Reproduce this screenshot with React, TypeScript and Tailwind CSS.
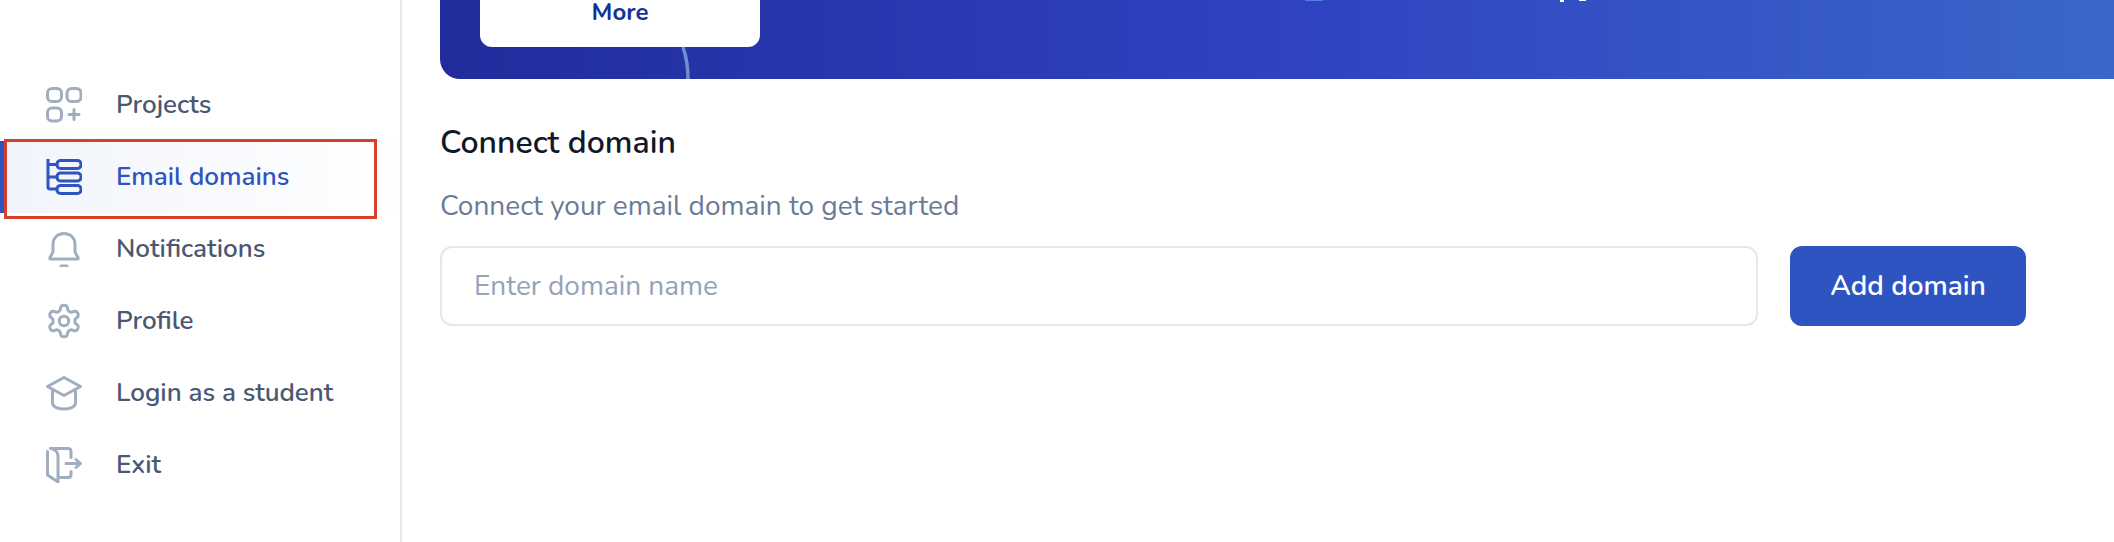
const font = "font-['Nunito','Lato','Noto_Sans',sans-serif]";

function ProjectsIcon() {
  return (
    <svg width="36" height="36" viewBox="0 0 36 36" fill="none" stroke="#a0aec0" strokeWidth="3" strokeLinecap="round">
      <rect x="1.5" y="1.5" width="14" height="13" rx="4.5" />
      <rect x="21" y="1.5" width="14" height="13" rx="4.5" />
      <rect x="1.5" y="21" width="14" height="13" rx="4.5" />
      <path d="M28 22.500v10M23 27.500h10" />
    </svg>
  );
}

function DomainsIcon() {
  return (
    <svg width="36" height="36" viewBox="0 0 36 36" fill="none" stroke="#2d54c0" strokeWidth="3" strokeLinecap="round">
      <rect x="11" y="1.500" width="24" height="8" rx="3.500" />
      <rect x="11" y="14" width="24" height="8" rx="3.500" />
      <rect x="11" y="26.500" width="24" height="8" rx="3.500" />
      <path d="M2 0.500v27.500a2 2 0 0 0 2 2h7M2 5.500h9M2 18h9" />
    </svg>
  );
}

function BellIcon() {
  return (
    <svg width="36" height="36" viewBox="0 0 36 36" fill="none" stroke="#a0aec0" strokeWidth="3" strokeLinecap="round" strokeLinejoin="round">
      <path d="M4 28h28c1-2.500-3-4.500-3-8v-6.500C29 7 24.500 2.500 18 2.500S7 7 7 13.500V20c0 3.500-4 5.500-3 8z" />
      <path d="M15 35h6" />
    </svg>
  );
}

function GearIcon() {
  return (
    <svg width="38" height="38" viewBox="0 0 24 24" fill="none" stroke="#a0aec0" strokeWidth="1.900" strokeLinecap="round" strokeLinejoin="round" className="-mx-px">
      <path d="M12.220 2h-.440a2 2 0 0 0-2 2v.180a2 2 0 0 1-1 1.730l-.430.250a2 2 0 0 1-2 0l-.150-.080a2 2 0 0 0-2.730.730l-.220.380a2 2 0 0 0 .730 2.730l.150.100a2 2 0 0 1 1 1.720v.510a2 2 0 0 1-1 1.740l-.150.090a2 2 0 0 0-.730 2.730l.220.380a2 2 0 0 0 2.730.730l.150-.080a2 2 0 0 1 2 0l.430.250a2 2 0 0 1 1 1.730V20a2 2 0 0 0 2 2h.440a2 2 0 0 0 2-2v-.180a2 2 0 0 1 1-1.730l.430-.250a2 2 0 0 1 2 0l.150.080a2 2 0 0 0 2.730-.730l.220-.390a2 2 0 0 0-.730-2.730l-.150-.080a2 2 0 0 1-1-1.740v-.500a2 2 0 0 1 1-1.740l.150-.090a2 2 0 0 0 .730-2.730l-.220-.380a2 2 0 0 0-2.730-.730l-.150.080a2 2 0 0 1-2 0l-.430-.250a2 2 0 0 1-1-1.730V4a2 2 0 0 0-2-2z" />
      <circle cx="12" cy="12" r="3" />
    </svg>
  );
}

function CapIcon() {
  return (
    <svg width="36" height="36" viewBox="0 0 36 36" fill="none" stroke="#a0aec0" strokeWidth="3" strokeLinecap="round" strokeLinejoin="round">
      <path d="M18 2.500 34.500 11.500 18 20.500 1.500 11.500z" />
      <path d="M6.500 16v12c0 3.500 5 6 11.500 6s11.500-2.500 11.500-6V16" />
    </svg>
  );
}

function ExitIcon() {
  return (
    <svg width="36" height="36" viewBox="0 0 36 36" fill="none" stroke="#a0aec0" strokeWidth="3" strokeLinecap="round" strokeLinejoin="round">
      <path d="M1.500 4.500 1.500 28 12 35V8.500C12 5 8 1.500 4.500 1.500H22c2 0 3 1.500 3 3v6M25 24.500v3c0 2-1 3-3 3H12" />
      <path d="M20 16.500h14M30 12.500l4.500 4-4.500 4" />
    </svg>
  );
}

const items = [
  { label: 'Projects', icon: <ProjectsIcon /> },
  { label: 'Email domains', icon: <DomainsIcon />, active: true },
  { label: 'Notifications', icon: <BellIcon /> },
  { label: 'Profile', icon: <GearIcon /> },
  { label: 'Login as a student', icon: <CapIcon /> },
  { label: 'Exit', icon: <ExitIcon /> },
];

export default function App() {
  return (
    <div className={`${font} flex h-[542px] w-[2114px] overflow-hidden bg-white`}>
      {/* sidebar */}
      <aside className="h-full w-[402px] shrink-0 border-r-2 border-[#e2e8f0] pt-[69px]">
        {items.map((item) => (
          <div
            key={item.label}
            className={`relative flex h-[72px] items-center gap-[34px] pl-[46px] text-[26px] font-semibold ${
              item.active ? 'bg-gradient-to-r from-[#f1f4fb] to-white text-[#2d54c0]' : 'text-[#4a5872]'
            }`}
          >
            {item.active && <span className="absolute left-0 top-0 h-full w-[7px] bg-[#2d54c0]" />}
            {item.active && <span className="absolute left-[4px] top-[-2px] h-[80px] w-[373px] border-[3px] border-[#d4402a]" />}
            {item.icon}
            <span className="pb-[1px]">{item.label}</span>
          </div>
        ))}
      </aside>

      {/* main */}
      <main className="min-w-0 flex-1 pl-[38px]">
        <div className="relative h-[79px] overflow-hidden rounded-bl-[20px] bg-gradient-to-r from-[#212c9c] via-[#2f42c0] to-[#3b66c9] pl-[40px]">
          <div className="flex h-[47px] w-[280px] items-start justify-center rounded-b-[12px] bg-white text-[24px] font-bold leading-[24px] text-[#12329a]">
            More
          </div>
          <svg className="absolute left-[240px] top-[47px]" width="12" height="32" viewBox="0 0 12 32" fill="none">
            <path d="M3 0c3 9 5 20 5 32" stroke="#6f8ecf" strokeWidth="3.500" />
          </svg>
          {/* bits of the cropped banner content */}
          <span className="absolute left-[865px] top-0 h-px w-[18px] bg-[#4f7fe0]" />
          <span className="absolute left-[1120px] top-0 h-[2px] w-[4px] bg-white" />
          <span className="absolute left-[1139px] top-0 h-px w-[7px] bg-white" />
        </div>
        <h2 className="mt-[42px] text-[32px] font-semibold leading-[44px] text-[#111827]">Connect domain</h2>
        <p className="mt-[22px] text-[28px] leading-[38px] text-[#6b7a99]">Connect your email domain to get started</p>
        <div className="mt-[21px] flex gap-[32px]">
          <input
            placeholder="Enter domain name"
            className="h-[80px] w-[1318px] rounded-[12px] border-2 border-[#e2e8f0] px-[32px] text-[28px] outline-none placeholder:text-[#94a3b8]"
          />
          <button className="h-[80px] w-[236px] rounded-[12px] bg-[#2d54c0] text-[28px] font-semibold text-white">
            Add domain
          </button>
        </div>
      </main>
    </div>
  );
}
